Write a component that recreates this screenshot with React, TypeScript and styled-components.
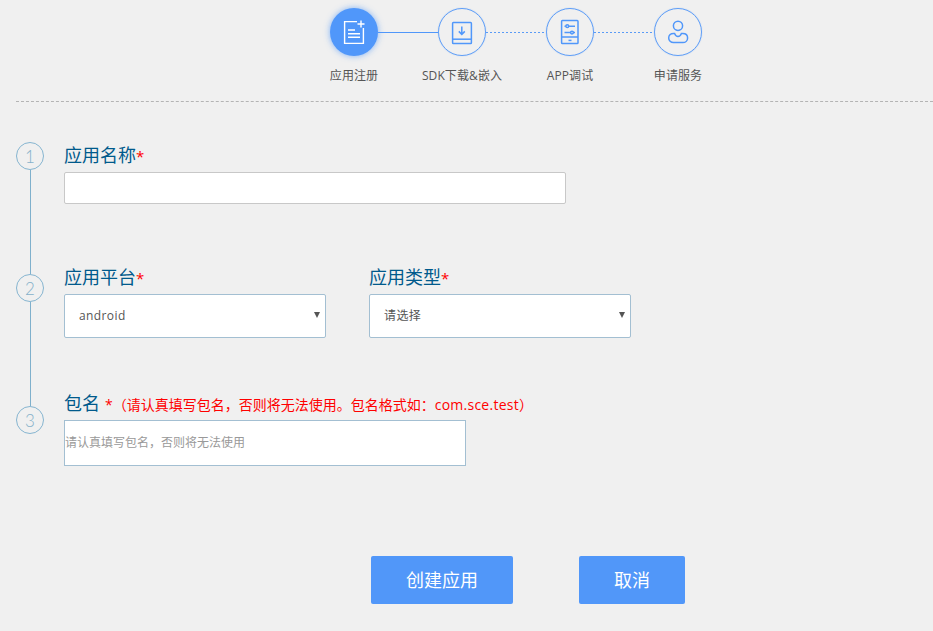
import React from "react";
import styled, { createGlobalStyle } from "styled-components";

const FONT = `"Open Sans", "Noto Sans CJK SC", sans-serif`;

const GlobalStyle = createGlobalStyle`
  html, body {
    margin: 0;
    padding: 0;
    background: #f0f0f0;
    font-family: ${FONT};
  }
`;

function DocPlusIcon() {
  return (
    <svg width="48" height="48" viewBox="0 0 48 48" fill="none" stroke="#fff" strokeWidth="1.4">
      <path d="M27 13.6H14.6V35.4H33.4V20" />
      <path d="M31 12.5V19.5M27.5 16H34.5" />
      <path d="M18 22H25M18 25.7H30M18 29.3H30" />
    </svg>
  );
}

function DownloadBookIcon() {
  return (
    <svg width="46" height="46" viewBox="1 1 46 46" fill="none" stroke="#5097fa" strokeWidth="1.5">
      <rect x="14.6" y="14.6" width="18.8" height="21" rx="0.8" />
      <path d="M14.6 31.2H33.4" />
      <path d="M23.8 18.6V26.2M20.8 23.4L23.8 26.4L26.8 23.4" />
    </svg>
  );
}

function PhoneSliderIcon() {
  return (
    <svg width="46" height="46" viewBox="1 1 46 46" fill="none" stroke="#5097fa" strokeWidth="1.5">
      <rect x="15.6" y="12.6" width="16.4" height="23" rx="0.8" />
      <path d="M15.6 29H32" />
      <path d="M22.5 32.4H25.5" />
      <path d="M18.5 18.2H29M18.5 24.6H29" />
      <circle cx="21.3" cy="18.2" r="1.4" fill="#f0f0f0" />
      <circle cx="26" cy="24.6" r="1.4" fill="#f0f0f0" />
    </svg>
  );
}

function PersonIcon() {
  return (
    <svg width="46" height="46" viewBox="1 1 46 46" fill="none" stroke="#5097fa" strokeWidth="1.5">
      <circle cx="24" cy="17.8" r="4.6" />
      <path d="M19.5 25.4H20.6C21.2 27 22.4 28.4 24 28.4C25.6 28.4 26.8 27 27.4 25.4H28.8C31.6 25.4 33.6 27.2 33.6 29.9C33.6 32.6 31.6 34.6 28.8 34.6H19.5C16.8 34.6 14.7 32.6 14.7 29.9C14.7 27.2 16.8 25.4 19.5 25.4Z" />
    </svg>
  );
}

const stepLabels = ["应用注册", "SDK下载&嵌入", "APP调试", "申请服务"];

function App() {
  return (
    <Page>
      <GlobalStyle />
      <Steps>
        <StepTrack>
          <ActiveCircle><DocPlusIcon /></ActiveCircle>
          <StepLink $done />
          <StepCircle><DownloadBookIcon /></StepCircle>
          <StepLink />
          <StepCircle><PhoneSliderIcon /></StepCircle>
          <StepLink />
          <StepCircle><PersonIcon /></StepCircle>
        </StepTrack>
        <StepLabels>
          {stepLabels.map((label) => (
            <StepLabel key={label}>{label}</StepLabel>
          ))}
        </StepLabels>
      </Steps>
      <Divider />

      <Form>
        <FormRow $height={122}>
          <Rail>
            <RailNumber>1</RailNumber>
            <RailLine />
          </Rail>
          <Fields>
            <Field>
              <FieldLabel>应用名称<Star>*</Star></FieldLabel>
              <NameInput type="text" />
            </Field>
          </Fields>
        </FormRow>

        <FormRow $height={126}>
          <Rail>
            <RailLine $height={10} />
            <RailNumber>2</RailNumber>
            <RailLine />
          </Rail>
          <Fields>
            <Field>
              <FieldLabel>应用平台<Star>*</Star></FieldLabel>
              <SelectBox>
                <Select defaultValue="android">
                  <option value="android">android</option>
                  <option value="ios">ios</option>
                </Select>
              </SelectBox>
            </Field>
            <Field>
              <FieldLabel>应用类型<Star>*</Star></FieldLabel>
              <SelectBox>
                <Select defaultValue="">
                  <option value="">请选择</option>
                </Select>
              </SelectBox>
            </Field>
          </Fields>
        </FormRow>

        <FormRow>
          <Rail>
            <RailLine $height={16} />
            <RailNumber>3</RailNumber>
          </Rail>
          <Fields>
            <Field>
              <FieldLabel $gap={2}>
                包名<Note>*（请认真填写包名，否则将无法使用。包名格式如：<NoteLatin>com.sce.test</NoteLatin>）</Note>
              </FieldLabel>
              <PackageInput type="text" placeholder="请认真填写包名，否则将无法使用" />
            </Field>
          </Fields>
        </FormRow>
      </Form>

      <Actions>
        <PrimaryButton $width={142}>创建应用</PrimaryButton>
        <PrimaryButton $width={106}>取消</PrimaryButton>
      </Actions>
    </Page>
  );
}
export default App;

const Page = styled.div`
  width: 933px;
  height: 631px;
  overflow: hidden;
  background: #f0f0f0;
`;

const Steps = styled.header`
  padding: 8px 0 0 300px;
`;

const StepTrack = styled.div`
  display: flex;
  align-items: center;
  padding-left: 30px;
`;

const ActiveCircle = styled.div`
  width: 48px;
  height: 48px;
  border-radius: 50%;
  background: #5097fa;
  box-shadow: 0 0 6px rgba(80, 151, 250, 0.7);
  flex: none;
`;

const StepCircle = styled.div`
  width: 48px;
  height: 48px;
  box-sizing: border-box;
  border: 1px solid #5f9ef7;
  border-radius: 50%;
  box-shadow: 0 0 1px rgba(80, 151, 250, 0.6);
  flex: none;
`;

const StepLink = styled.div<{ $done?: boolean }>`
  width: 60px;
  height: 1px;
  background: ${(p) =>
    p.$done
      ? "#5097fa"
      : "repeating-linear-gradient(to right, #5a9bf6 0 2px, transparent 2px 4px)"};
`;

const StepLabels = styled.div`
  display: grid;
  grid-template-columns: repeat(4, 108px);
  margin-top: 12px;
`;

const StepLabel = styled.div`
  text-align: center;
  font-size: 12px;
  line-height: 16px;
  letter-spacing: 0.1px;
  color: #555;
`;

const Divider = styled.div`
  margin: 17px 0 0 16px;
  border-top: 1px dashed #b4b4b4;
`;

const Form = styled.div`
  margin: 40px 0 0 16px;
`;

const FormRow = styled.div<{ $height?: number }>`
  display: flex;
  gap: 20px;
  height: ${(p) => (p.$height ? `${p.$height}px` : "auto")};
`;

const Rail = styled.div`
  width: 28px;
  display: flex;
  flex-direction: column;
  align-items: center;
  flex: none;
`;

const RailNumber = styled.div`
  width: 28px;
  height: 28px;
  box-sizing: border-box;
  border: 1px solid #86b5d0;
  border-radius: 50%;
  display: flex;
  align-items: center;
  justify-content: center;
  font-family: Lato, sans-serif;
  font-weight: 300;
  font-size: 17px;
  color: #86b0ca;
  flex: none;
`;

const RailLine = styled.div<{ $height?: number }>`
  width: 1px;
  background: #7fb0cc;
  ${(p) => (p.$height ? `height: ${p.$height}px; flex: none;` : "flex: 1;")}
`;

const Fields = styled.div`
  display: flex;
  gap: 43px;
`;

const Field = styled.div`
  display: flex;
  flex-direction: column;
`;

const FieldLabel = styled.label<{ $gap?: number }>`
  font-size: 18px;
  line-height: 26px;
  color: #005a8c;
  margin-bottom: ${(p) => p.$gap ?? 3}px;
`;

const Star = styled.span`
  color: #f00;
  font-size: 15px;
`;

const Note = styled.span`
  color: #f00;
  font-size: 14px;
  margin-left: 5px;
`;

const NoteLatin = styled.span`
  letter-spacing: 0.25px;
`;

const NameInput = styled.input`
  width: 502px;
  height: 32px;
  box-sizing: border-box;
  background: #fff;
  border: 1px solid #c8c8c8;
  border-radius: 2px;
  outline: none;
`;

const SelectBox = styled.div`
  position: relative;
  width: 262px;
  height: 44px;

  &::after {
    content: "";
    position: absolute;
    right: 6px;
    top: 18px;
    border-left: 3.5px solid transparent;
    border-right: 3.5px solid transparent;
    border-top: 6px solid #555;
    pointer-events: none;
  }
`;

const Select = styled.select`
  width: 100%;
  height: 100%;
  box-sizing: border-box;
  appearance: none;
  background: #fff;
  border: 1px solid #a3bfd2;
  border-radius: 2px;
  padding: 0 14px 2px;
  font-family: ${FONT};
  font-size: 12px;
  letter-spacing: 0.4px;
  color: #555;
  outline: none;
`;

const PackageInput = styled.input`
  width: 402px;
  height: 46px;
  box-sizing: border-box;
  background: #fff;
  border: 1px solid #a3bfd2;
  padding: 0 0 2px;
  font-family: ${FONT};
  font-size: 12px;
  outline: none;

  &::placeholder {
    color: #999;
    opacity: 1;
  }
`;

const Actions = styled.div`
  display: flex;
  gap: 66px;
  margin: 90px 0 0 371px;
`;

const PrimaryButton = styled.button<{ $width: number }>`
  width: ${(p) => p.$width}px;
  height: 48px;
  border: none;
  border-radius: 2px;
  background: #5197f9;
  color: #fff;
  font-family: ${FONT};
  font-size: 18px;
  padding: 0 0 2px;
`;
